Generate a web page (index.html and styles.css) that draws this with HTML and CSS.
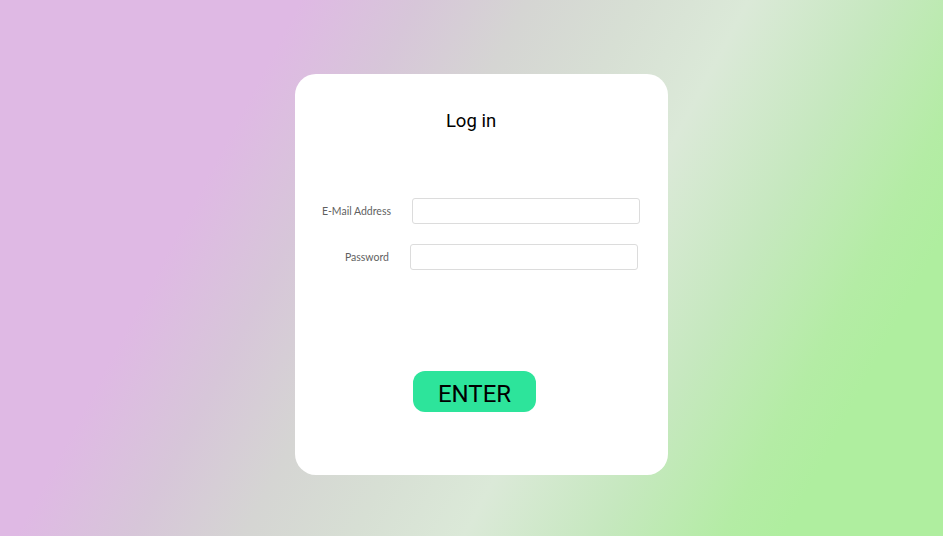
FILE: index.html
```html
<!DOCTYPE html>
<html>
<head>
<meta charset="utf-8">
<link rel="stylesheet" href="styles.css">
</head>
<body>
<main class="card">
  <h1 class="title">Log in</h1>
  <form class="form">
    <div class="row row-email">
      <label class="label" for="email">E-Mail Address</label>
      <input class="field" id="email" type="email">
    </div>
    <div class="row row-pass">
      <label class="label" for="pass">Password</label>
      <input class="field" id="pass" type="password">
    </div>
    <button class="enter" type="button">ENTER</button>
  </form>
</main>
</body>
</html>
```

FILE: styles.css
```css
html, body {
  margin: 0;
  height: 100%;
}
body {
  background: linear-gradient(118deg, #dfb9e4 0%, #dfb9e4 24.5%, #d7c6d9 34%, #d5d5d3 43%, #d7dfd4 52%, #dbe9d8 61%, #c6e8bf 72%, #b4eca5 82%, #afee9f 87%, #afee9f 100%);
  font-family: Roboto, "Liberation Sans", sans-serif;
  padding: 74px 0 0 295px;
  box-sizing: border-box;
}
.card {
  width: 373px;
  height: 401px;
  background: #fff;
  border-radius: 21px;
  box-sizing: border-box;
  display: flex;
  flex-direction: column;
}
.title {
  margin: 35px 0 0 0;
  padding-right: 21px;
  font-weight: 400;
  font-size: 18.5px;
  line-height: 24px;
  text-align: center;
  color: #000;
}
.form {
  display: flex;
  flex-direction: column;
  margin-top: 65px;
}
.row {
  display: flex;
  align-items: center;
}
.row-email {
  padding-left: 26px;
}
.row-pass {
  margin-top: 20px;
  padding-left: 24px;
}
.label {
  width: 70px;
  margin-right: 21px;
  text-align: right;
  font-family: Lato, "Open Sans", sans-serif;
  font-size: 10.5px;
  color: #5f5f5f;
  white-space: nowrap;
}
.field {
  width: 228px;
  height: 26px;
  box-sizing: border-box;
  border: 1px solid #dcdcdc;
  border-radius: 3px;
  background: #fff;
  margin: 0;
  padding: 0 6px;
}
.enter {
  align-self: flex-start;
  margin: 101px 0 0 118px;
  width: 123px;
  height: 41px;
  border: none;
  border-radius: 12px;
  background: #2de49b;
  font-family: Roboto, "Liberation Sans", sans-serif;
  font-size: 24px;
  line-height: 24px;
  color: #000;
  padding: 4px 0 0 0;
  cursor: pointer;
}
```
